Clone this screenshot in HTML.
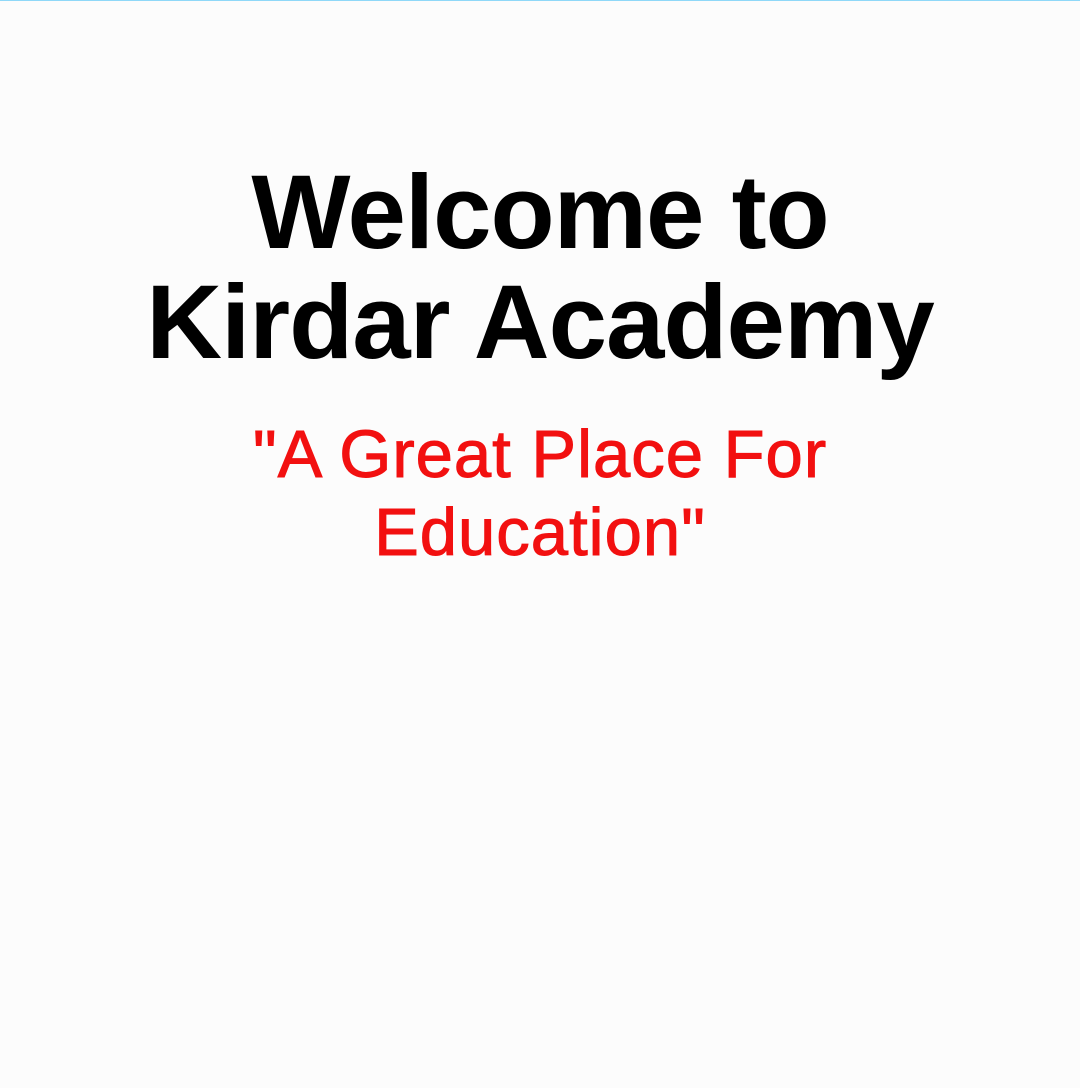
<!DOCTYPE html>
<html><head><meta charset="utf-8"><style>
html,body{margin:0;padding:0;}
body{width:1080px;height:1088px;background:#fcfcfc;position:relative;overflow:hidden;font-family:"Liberation Sans",sans-serif;}
.bar{position:absolute;left:0;top:0;width:1080px;height:1px;background:#8fd8f8;}
h1{position:absolute;left:0;top:158px;width:1080px;margin:0;text-align:center;font-size:105px;line-height:110px;font-weight:bold;color:#000;letter-spacing:-1px;}
p{position:absolute;left:0;top:416px;width:1080px;margin:0;text-align:center;font-size:67px;line-height:78px;color:#f21010;letter-spacing:1px;-webkit-text-stroke:1px #f21010;}
</style></head><body>
<div class="bar"></div>
<h1>Welcome to<br>Kirdar Academy</h1>
<p>"A Great Place For<br>Education"</p>
</body></html>
